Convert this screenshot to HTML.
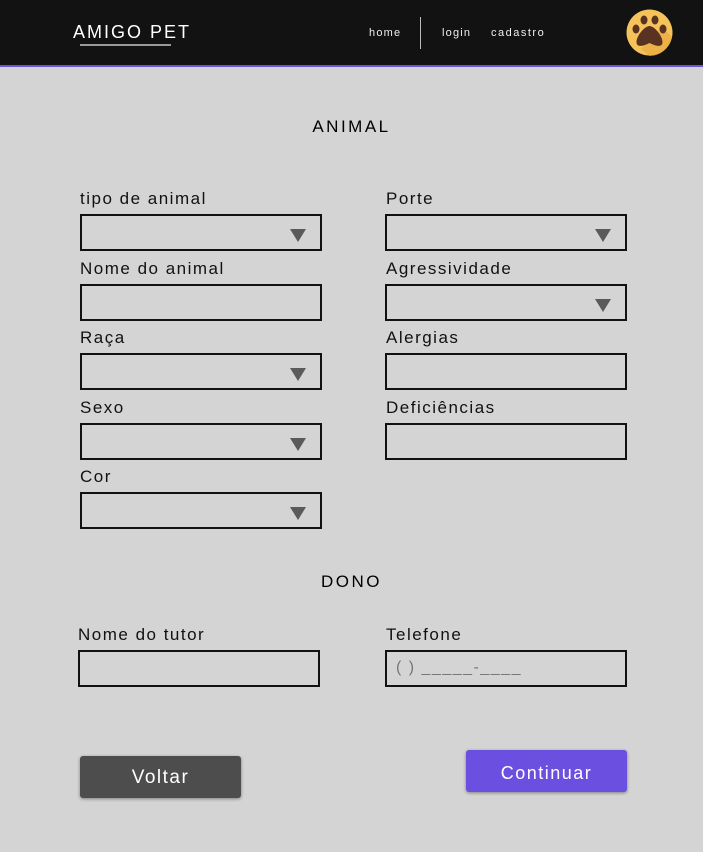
<html><head><style>
body{margin:0;width:703px;height:852px;background:#d4d4d4;font-family:"Liberation Sans",sans-serif;position:relative;overflow:hidden}
.hdr{position:absolute;left:0;top:0;width:703px;height:65px;background:#121212;border-bottom:2px solid #6a55d6}
.a{position:absolute}
.lbl{position:absolute;font-size:17px;letter-spacing:1.5px;color:#111;top:0}
.f{position:absolute;width:238px;height:33px;border:2px solid #111;box-sizing:content-box}
.tri{position:absolute;right:14px;top:13px;width:0;height:0;border-left:8px solid transparent;border-right:8px solid transparent;border-top:13px solid #5a5a5a}
</style></head><body>
<div class="hdr">
<div class="a" style="left:73px;top:22px;color:#fff;font-size:18px;letter-spacing:2px">AMIGO PET</div>
<div class="a" style="left:80px;top:44px;width:91px;height:2px;background:#999"></div>
<div class="a" style="left:369px;top:27px;color:#eee;font-size:11px;letter-spacing:1.2px">home</div>
<div class="a" style="left:420px;top:17px;width:1px;height:32px;background:#bbb"></div>
<div class="a" style="left:442px;top:27px;color:#eee;font-size:11px;letter-spacing:1.2px">login</div>
<div class="a" style="left:491px;top:27px;color:#eee;font-size:11px;letter-spacing:1.5px">cadastro</div>
<svg class="a" style="left:626px;top:9px" width="47" height="47" viewBox="0 0 47 47"><circle cx="23.5" cy="23.5" r="23" fill="#f5c35a"/><path d="M23.5 47A23 23 0 0 0 46 28L36 18 15 40z" fill="#e8a93f" opacity=".7"/><ellipse cx="18" cy="11" rx="3.5" ry="4.5" fill="#5a3222"/><ellipse cx="29" cy="11" rx="3.5" ry="4.5" fill="#5a3222"/><ellipse cx="10" cy="20" rx="3.5" ry="4.5" fill="#5a3222"/><ellipse cx="37" cy="20" rx="3.5" ry="4.5" fill="#5a3222"/><path d="M23.5 17c-5 0-13 10-13 16 0 5 5 5 13 1 8 4 13 4 13-1 0-6-8-16-13-16z" fill="#5a3222"/></svg>
</div>
<div class="a" style="left:0;width:703px;top:117px;text-align:center;font-size:17px;letter-spacing:2.5px">ANIMAL</div>

<div class="lbl" style="left:80px;top:189px">tipo de animal</div>
<div class="f" style="left:80px;top:214px"><div class="tri"></div></div>
<div class="lbl" style="left:80px;top:259px">Nome do animal</div>
<div class="f" style="left:80px;top:284px"></div>
<div class="lbl" style="left:80px;top:328px">Raça</div>
<div class="f" style="left:80px;top:353px"><div class="tri"></div></div>
<div class="lbl" style="left:80px;top:398px">Sexo</div>
<div class="f" style="left:80px;top:423px"><div class="tri"></div></div>
<div class="lbl" style="left:80px;top:467px">Cor</div>
<div class="f" style="left:80px;top:492px"><div class="tri"></div></div>

<div class="lbl" style="left:386px;top:189px">Porte</div>
<div class="f" style="left:385px;top:214px"><div class="tri"></div></div>
<div class="lbl" style="left:386px;top:259px">Agressividade</div>
<div class="f" style="left:385px;top:284px"><div class="tri"></div></div>
<div class="lbl" style="left:386px;top:328px">Alergias</div>
<div class="f" style="left:385px;top:353px"></div>
<div class="lbl" style="left:386px;top:398px">Deficiências</div>
<div class="f" style="left:385px;top:423px"></div>

<div class="a" style="left:0;width:703px;top:572px;text-align:center;font-size:17px;letter-spacing:2.5px">DONO</div>
<div class="lbl" style="left:78px;top:625px">Nome do tutor</div>
<div class="f" style="left:78px;top:650px"></div>
<div class="lbl" style="left:386px;top:625px">Telefone</div>
<div class="f" style="left:385px;top:650px"><div class="a" style="left:9px;top:7px;color:#777;font-size:16px;letter-spacing:1.5px">( ) _____-____</div></div>

<div class="a" style="left:80px;top:756px;width:161px;height:42px;background:#4d4d4d;border-radius:3px;color:#fff;font-size:19px;letter-spacing:1.5px;text-align:center;line-height:44px;box-shadow:0 1px 3px rgba(0,0,0,.4)">Voltar</div>
<div class="a" style="left:466px;top:750px;width:161px;height:42px;background:#6a4fe0;border-radius:3px;color:#fff;font-size:18px;letter-spacing:1.5px;text-align:center;line-height:46px;box-shadow:0 1px 3px rgba(0,0,0,.4)">Continuar</div>
</body></html>
